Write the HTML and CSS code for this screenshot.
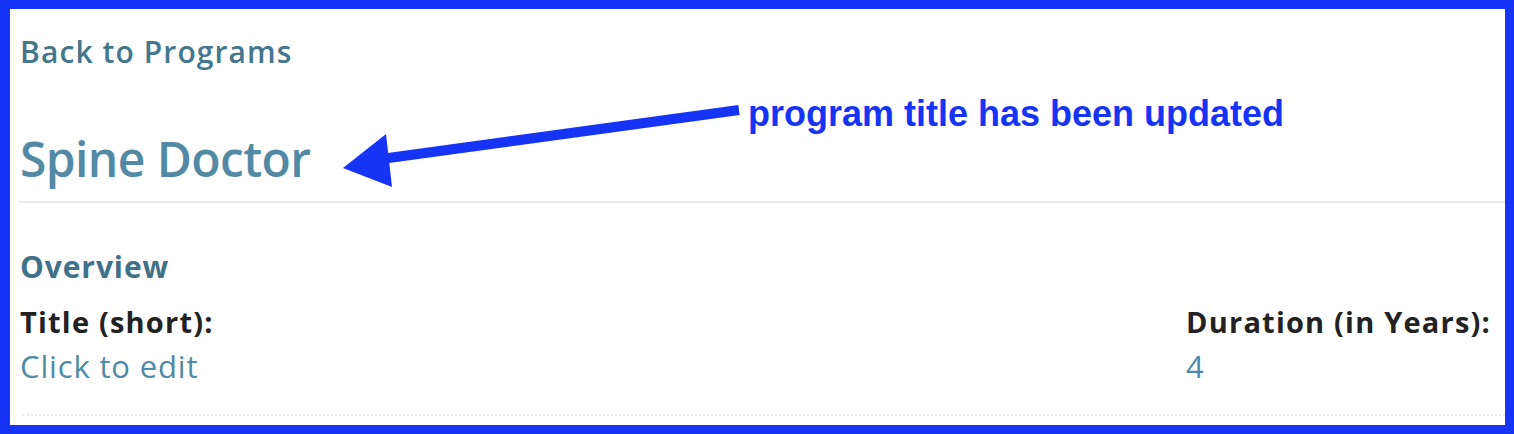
FILE: index.html
```html
<!DOCTYPE html>
<html lang="en">
<head>
<meta charset="utf-8">
<title>Spine Doctor</title>
<link rel="stylesheet" href="styles.css">
</head>
<body>
<div class="frame">
  <div class="page">
    <a class="back" href="#">Back to Programs</a>
    <h1 class="title">Spine Doctor</h1>
    <div class="rule"></div>
    <h2 class="section">Overview</h2>
    <div class="fields">
      <div class="field">
        <div class="label">Title (short):</div>
        <div class="value">Click to edit</div>
      </div>
      <div class="field field-right">
        <div class="label">Duration (in Years):</div>
        <div class="value">4</div>
      </div>
    </div>
    <div class="dots"></div>
  </div>
  <div class="note">
    <svg class="arrow" width="420" height="100" viewBox="0 0 420 100" aria-hidden="true">
      <line x1="398" y1="30" x2="40" y2="79" stroke="#1634f5" stroke-width="10"/>
      <polygon points="2,88 45,54 51,107" fill="#1634f5"/>
    </svg>
    <span class="note-text">program title has been updated</span>
  </div>
</div>
</body>
</html>
```

FILE: styles.css
```css
html, body {
  margin: 0;
  padding: 0;
  background: #fff;
}

.frame {
  position: relative;
  box-sizing: border-box;
  width: 1514px;
  height: 434px;
  border-style: solid;
  border-color: #1634f5;
  border-width: 9px 9px 9px 10px;
  background: #fff;
  overflow: hidden;
}

.page {
  display: flex;
  flex-direction: column;
  align-items: stretch;
  padding: 26px 0 0 9px;
  font-family: "Open Sans", "Noto Sans", sans-serif;
}

.back {
  align-self: flex-start;
  margin-left: 1px;
  font-size: 30px;
  font-weight: 600;
  letter-spacing: 1.1px;
  color: #44768c;
  text-decoration: none;
  line-height: 34px;
}

.title {
  margin: 60px 0 0 1px;
  font-size: 48px;
  font-weight: 600;
  letter-spacing: -0.6px;
  color: #528aa5;
  line-height: 60px;
}

.rule {
  margin-top: 12px;
  height: 2px;
  background: #e6e9e9;
}

.section {
  margin: 47px 0 0 1px;
  font-size: 30px;
  font-weight: 700;
  letter-spacing: 0.9px;
  color: #3f7189;
  line-height: 34px;
}

.fields {
  display: flex;
  justify-content: space-between;
  margin: 21px 14px 0 1px;
}

.label {
  font-size: 29px;
  font-weight: 700;
  letter-spacing: 1.2px;
  color: #222;
  line-height: 34px;
}

.value {
  margin-top: 7px;
  font-size: 31px;
  letter-spacing: 0.85px;
  color: #4f8aa6;
  line-height: 40px;
}

.dots {
  margin: 28px 0 0 3px;
  border-top: 2px dotted #ececec;
}

.note {
  position: absolute;
  left: 331px;
  top: 71px;
  display: flex;
  align-items: flex-start;
}

.arrow {
  display: block;
  overflow: visible;
}

.note-text {
  margin: 14px 0 0 -13px;
  font-family: "Liberation Sans", Arial, sans-serif;
  font-weight: 700;
  font-size: 36px;
  line-height: 40px;
  color: #1634f5;
  white-space: nowrap;
}
```
